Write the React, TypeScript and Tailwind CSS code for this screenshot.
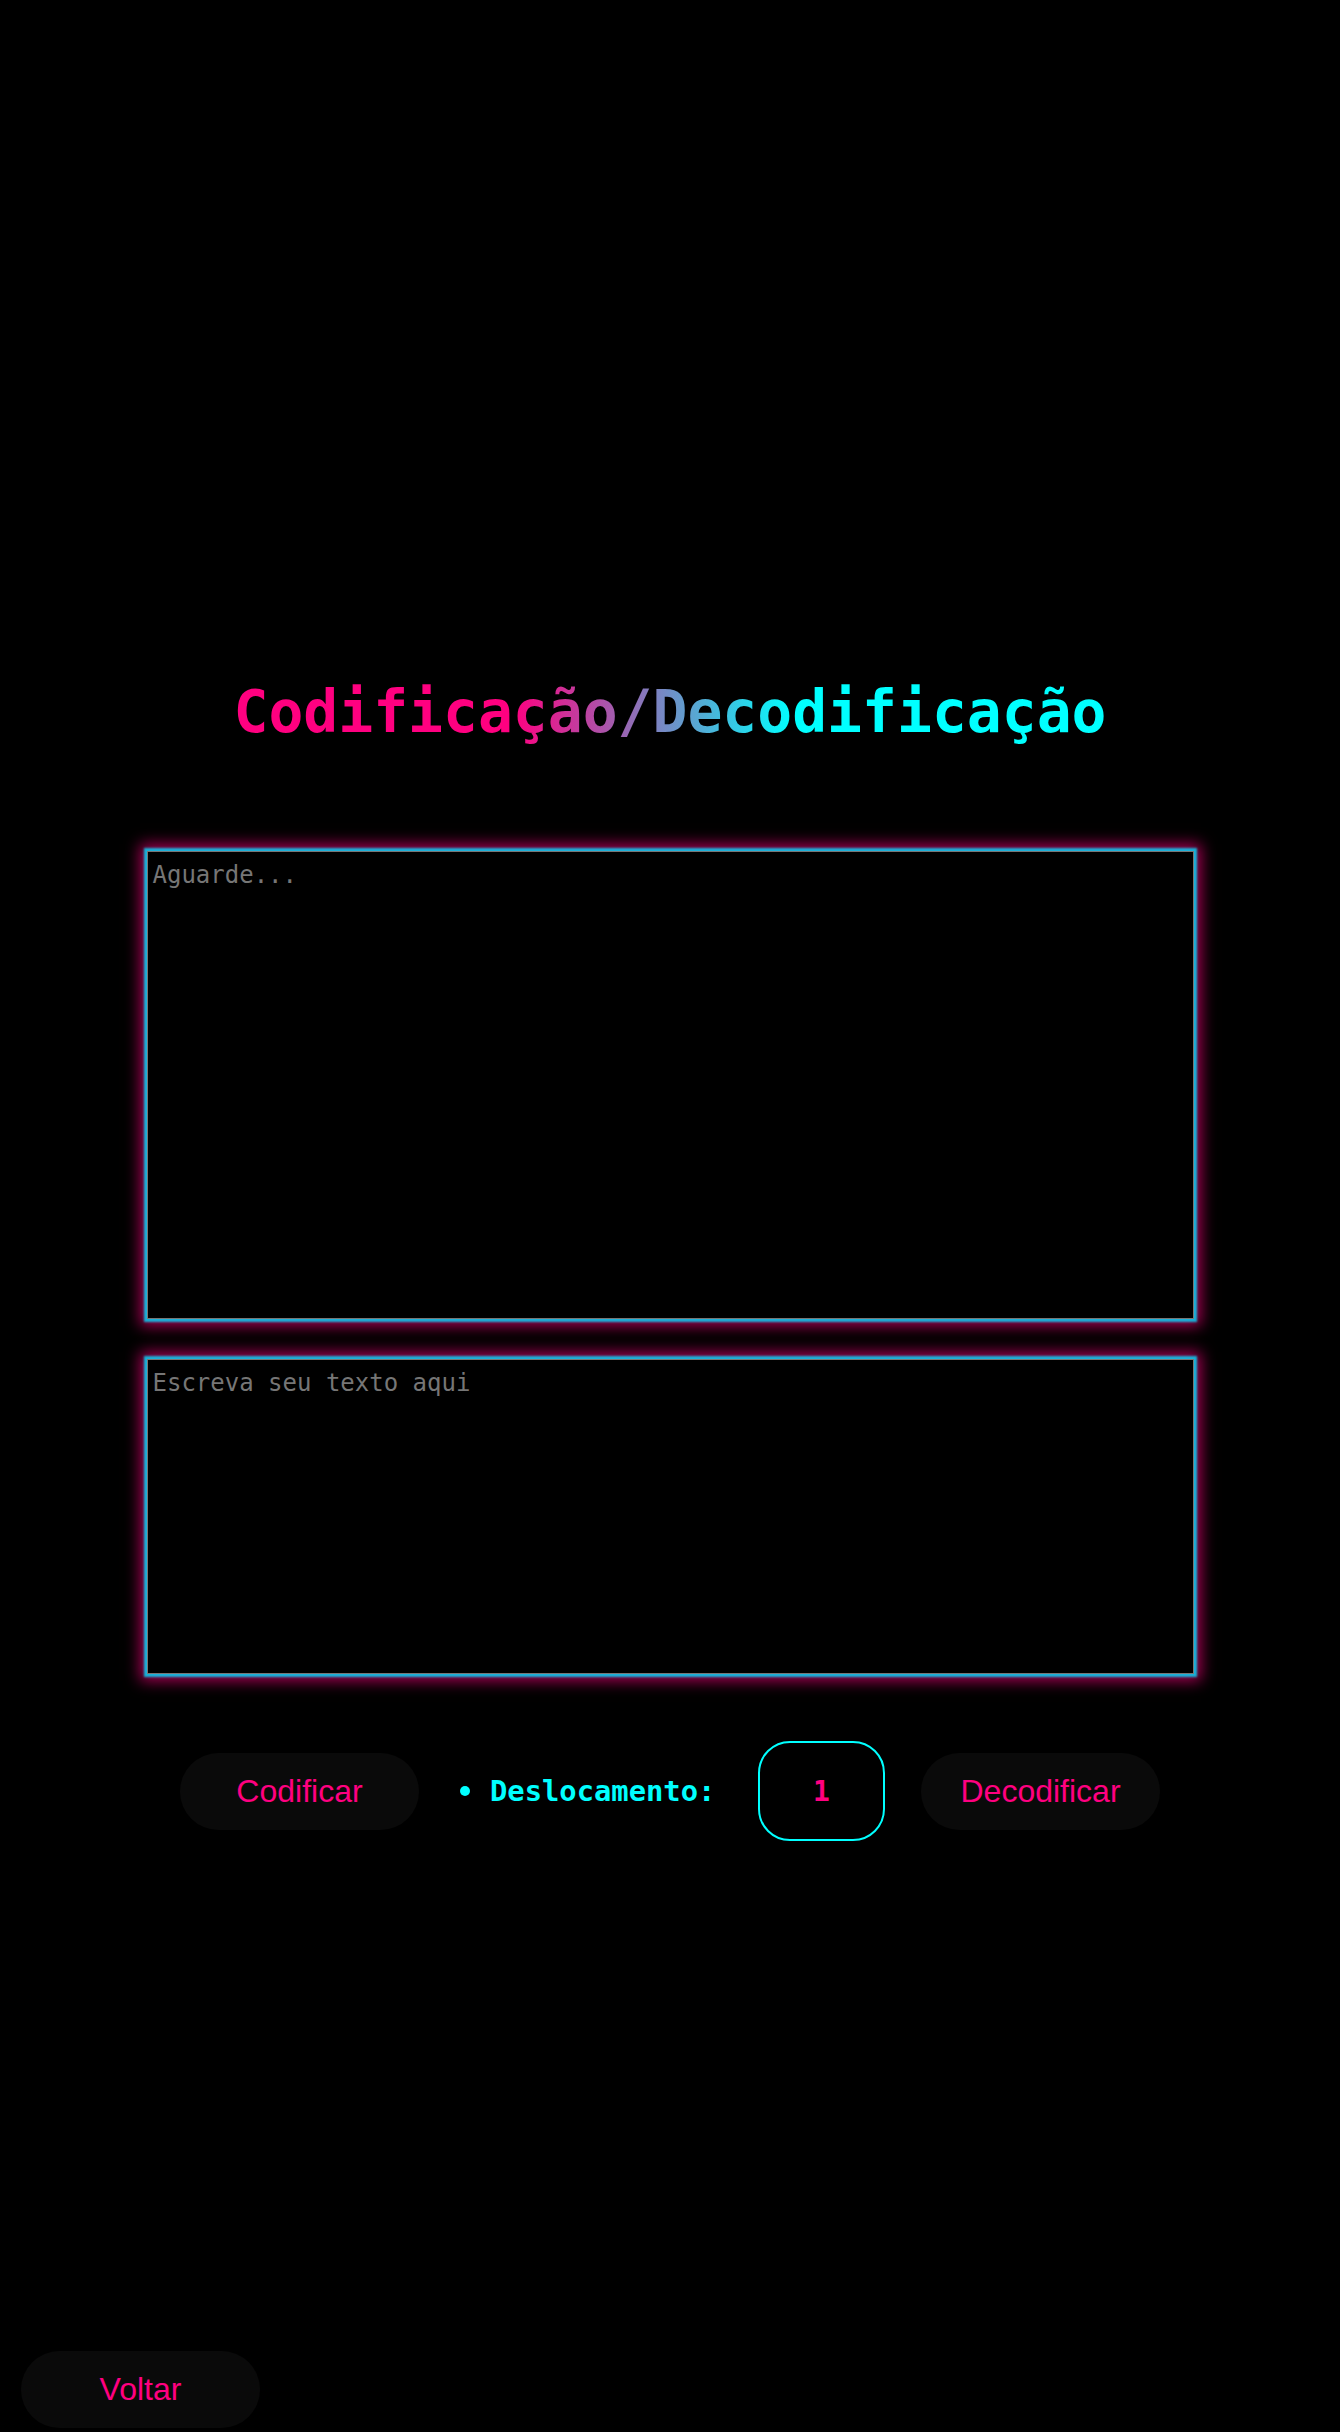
import React from "react";

const mono = "font-['DejaVu_Sans_Mono','Liberation_Mono',monospace]";
const sans = "font-['Liberation_Sans',Arial,sans-serif]";

function PillButton({ label }: { label: string }) {
  return (
    <button
      type="button"
      className={`${sans} w-[239px] h-[77px] shrink-0 rounded-full bg-[#0a0a0a] text-[32px] leading-[37px] text-[#ff0080]`}
    >
      {label}
    </button>
  );
}

export default function App() {
  return (
    <div className="min-h-screen bg-black flex flex-col">
      <main className="flex-1 flex flex-col items-center pt-[678px]">
        <h1
          className={`${mono} text-[58px] leading-[68px] font-bold bg-[linear-gradient(90deg,#ff0080_32%,#00ffff_64%)] bg-clip-text text-transparent`}
        >
          Codificação/Decodificação
        </h1>

        <textarea
          readOnly
          placeholder="Aguarde..."
          className={`${mono} mt-[105px] block w-[1047px] h-[468px] resize-none bg-black border border-[#767676] p-[5px] text-[24px] text-white placeholder:text-[#767676] outline-none shadow-[0_0_2px_3px_rgba(0,220,255,0.8),0_0_14px_7px_rgba(255,0,128,0.65)]`}
        />

        <textarea
          placeholder="Escreva seu texto aqui"
          className={`${mono} mt-[40px] block w-[1047px] h-[315px] resize-none bg-black border border-[#767676] p-[5px] text-[24px] text-white placeholder:text-[#767676] outline-none shadow-[0_0_2px_3px_rgba(0,220,255,0.8),0_0_14px_7px_rgba(255,0,128,0.65)]`}
        />

        <div className="mt-[67px] flex items-center">
          <PillButton label="Codificar" />
          <span className="ml-[41px] w-[10px] h-[10px] rounded-full bg-[#00ffff] shrink-0" />
          <span className={`${mono} ml-[20px] w-[225px] text-[28.8px] leading-[34px] font-bold text-[#00ffff] whitespace-nowrap`}>
            Deslocamento:
          </span>
          <input
            type="text"
            defaultValue="1"
            className={`${mono} ml-[43px] w-[127px] h-[100px] rounded-[32px] border-2 border-[#00ffff] bg-black text-center text-[28px] font-bold text-[#ff0080] outline-none`}
          />
          <div className="ml-[36px]">
            <PillButton label="Decodificar" />
          </div>
        </div>
      </main>

      <footer className="pl-[21px] pb-[4px]">
        <PillButton label="Voltar" />
      </footer>
    </div>
  );
}
